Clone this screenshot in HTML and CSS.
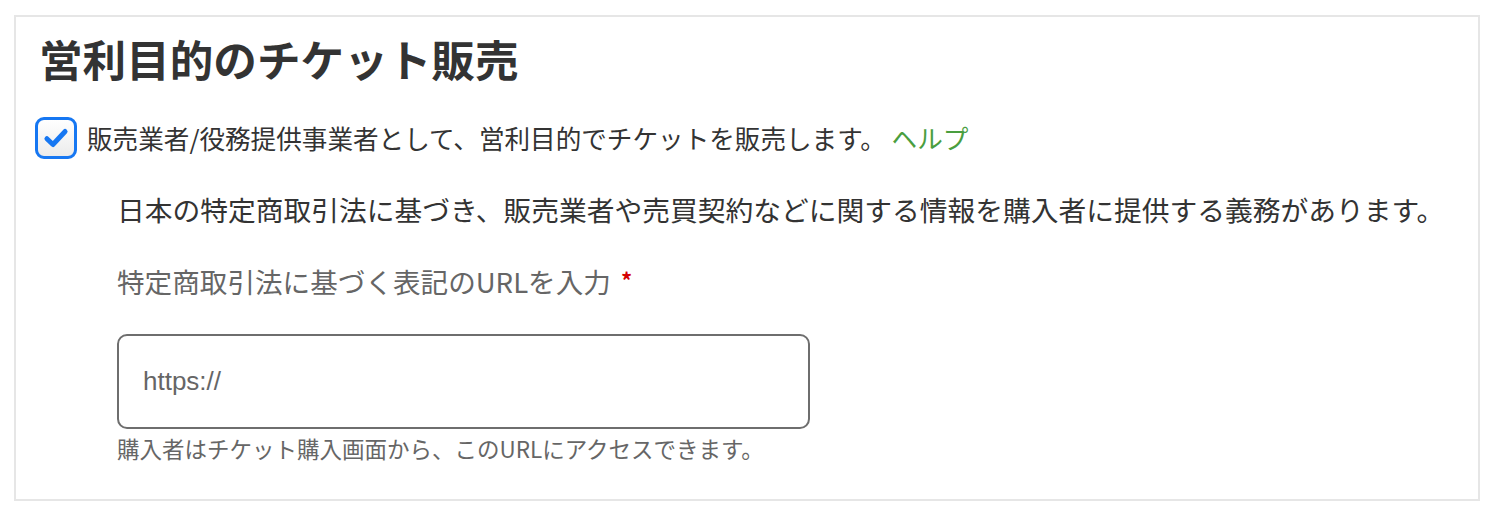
FILE: index.html
```html
<!DOCTYPE html>
<html lang="ja">
<head>
<meta charset="utf-8">
<title>営利目的のチケット販売</title>
<link rel="stylesheet" href="styles.css">
</head>
<body>
<div class="page">
  <section class="card">
    <h2 class="title">営利目的のチケット販売</h2>
    <label class="check-row">
      <span class="checkbox">
        <svg viewBox="0 0 24 24" width="24" height="24" aria-hidden="true">
          <path d="M4.2 12.6 L9.4 17.6 L19.8 6.4" fill="none" stroke="#1677f2" stroke-width="4.2" stroke-linecap="round" stroke-linejoin="round"/>
        </svg>
      </span>
      <span class="check-text">販売業者/役務提供事業者として、営利目的でチケットを販売します。 <a class="help" href="#">ヘルプ</a></span>
    </label>
    <div class="details">
      <p class="notice">日本の特定商取引法に基づき、販売業者や売買契約などに関する情報を購入者に提供する義務があります。</p>
      <div class="field-label">特定商取引法に基づく表記のURLを入力 <span class="req">*</span></div>
      <div class="input">https://</div>
      <div class="hint">購入者はチケット購入画面から、このURLにアクセスできます。</div>
    </div>
  </section>
</div>
</body>
</html>
```

FILE: styles.css
```css
html, body {
  margin: 0;
  padding: 0;
  background: #ffffff;
}

body {
  font-family: "Noto Sans CJK JP", "Noto Sans", "Liberation Sans", sans-serif;
  color: #333333;
}

.page {
  padding: 15px 16px 0 14px;
}

.card {
  box-sizing: border-box;
  height: 486px;
  border: 2px solid #e6e6e6;
  padding: 11px 20px 0 19px;
}

.title {
  margin: 0 0 0 4px;
  font-size: 43.6px;
  line-height: 60px;
  font-weight: 700;
  color: #333333;
}

.check-row {
  display: flex;
  align-items: center;
  gap: 10px;
  margin-top: 29px;
}

.checkbox {
  box-sizing: border-box;
  width: 42px;
  height: 42px;
  flex: none;
  border: 3px solid #1677f2;
  border-radius: 9px;
  background: linear-gradient(#ffffff, #ebebeb);
  display: flex;
  align-items: center;
  justify-content: center;
}

.checkbox svg {
  width: 28px;
  height: 28px;
}

.check-text {
  font-size: 25.6px;
  line-height: 42px;
  color: #333333;
}

.help {
  color: #4a9e3f;
  text-decoration: none;
}

.details {
  padding-left: 82px;
}

.notice {
  margin: 30px 0 0 0;
  font-size: 27.75px;
  line-height: 40px;
  color: #333333;
}

.field-label {
  margin-top: 32px;
  font-size: 27.6px;
  line-height: 40px;
  color: #666666;
}

.req {
  color: #d40000;
  font-size: 22px;
  font-weight: 700;
  vertical-align: top;
  position: relative;
  top: -2px;
  margin-left: 4px;
}

.input {
  box-sizing: border-box;
  margin-top: 33px;
  width: 693px;
  height: 95px;
  border: 2px solid #6e6e6e;
  border-radius: 10px;
  padding-left: 24px;
  display: flex;
  align-items: center;
  font-family: "Liberation Sans", Arial, sans-serif;
  font-size: 26px;
  color: #666666;
}

.hint {
  margin-top: 3px;
  font-size: 22.5px;
  line-height: 32px;
  color: #666666;
}
```
